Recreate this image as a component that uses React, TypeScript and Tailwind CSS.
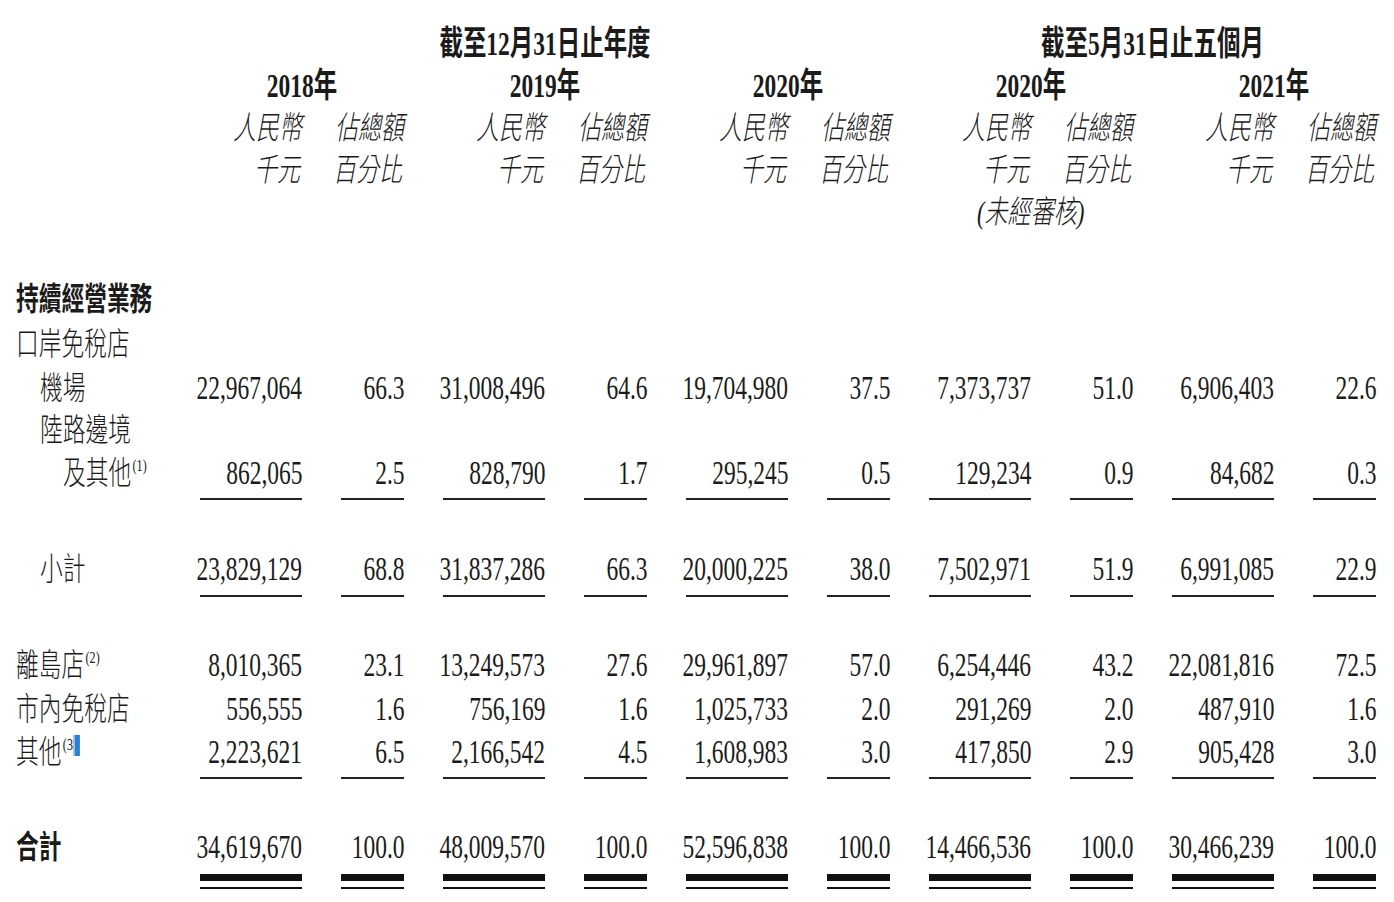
import React from "react";

const GRID = "grid grid-cols-[161px_repeat(5,102px_63px)] gap-x-[39px]";

type Line = {
  label: string;
  note?: string;
  indent: string;
  bold?: boolean;
  h: string;
  vals?: string[];
};

const Num = ({ v }: { v: string }) => (
  <div className="flex justify-end items-center">
    <span className="inline-block whitespace-nowrap origin-right scale-x-[0.69] text-[34px] leading-none">{v}</span>
  </div>
);

const Label = ({ row }: { row: Line }) => (
  <div className={`flex items-center ${row.indent}`}>
    <span
      className={`inline-block whitespace-nowrap origin-left scale-x-[0.71] text-[32px] leading-none ${
        row.bold ? "font-bold" : "font-light"
      }`}
    >
      {row.label}
      {row.note === "(3)" ? (
        <span className="inline-flex align-top items-start text-[17px] ml-[2px] font-normal">
          (3<span className="inline-block w-[9px] h-[21px] mt-[-1px] ml-[1px] bg-[#2f7fd0] border-l-2 border-[#9cc8ef]" />
        </span>
      ) : row.note ? (
        <span className="align-top text-[17px] ml-[2px] font-normal">{row.note}</span>
      ) : null}
    </span>
  </div>
);

const DataRow = ({ row }: { row: Line }) => (
  <div className={`${GRID} ${row.h}`}>
    <Label row={row} />
    {row.vals ? row.vals.map((v, i) => <Num key={i} v={v} />) : null}
  </div>
);

const Rule = ({ top, double }: { top: string; double?: boolean }) => (
  <div className={`${GRID} ${top}`}>
    <div />
    {Array.from({ length: 10 }).map((_, i) =>
      double ? (
        <div key={i} className="flex flex-col">
          <div className="h-[7px] bg-[#111]" />
          <div className="h-[2px] mt-[6px] bg-[#111]" />
        </div>
      ) : (
        <div key={i} className="h-[2px] bg-[#222]" />
      )
    )}
  </div>
);

const Cond = ({
  children,
  origin = "origin-right",
  cls = "",
}: {
  children: React.ReactNode;
  origin?: string;
  cls?: string;
}) => <span className={`inline-block whitespace-nowrap leading-none ${origin} ${cls}`}>{children}</span>;

const years = ["2018年", "2019年", "2020年", "2020年", "2021年"];

export default function App() {
  return (
    <div className="w-[1394px] h-[902px] overflow-hidden bg-white text-[#1b1b1b] font-['Liberation_Serif','Noto_Sans_CJK_TC',serif] pt-[23px]">
      {/* period headers */}
      <div className={`${GRID} h-[42px]`}>
        <div />
        <div className="col-span-6 flex justify-center items-center">
          <Cond origin="origin-center" cls="scale-x-[0.69] text-[34px] font-bold">截至12月31日止年度</Cond>
        </div>
        <div className="col-span-4 flex justify-center items-center">
          <Cond origin="origin-center" cls="scale-x-[0.69] text-[34px] font-bold">截至5月31日止五個月</Cond>
        </div>
      </div>

      <div className={`${GRID} h-[42px]`}>
        <div />
        {years.map((y, i) => (
          <div key={i} className="col-span-2 flex justify-center items-center">
            <Cond origin="origin-center" cls="scale-x-[0.69] text-[34px] font-bold">{y}</Cond>
          </div>
        ))}
      </div>

      <div className={`${GRID} h-[41px]`}>
        <div />
        {years.map((_, i) => (
          <React.Fragment key={i}>
            <div className="flex justify-end items-center">
              <Cond cls="scale-x-[0.72] text-[32px] italic font-light">人民幣</Cond>
            </div>
            <div className="flex justify-end items-center">
              <Cond cls="scale-x-[0.72] text-[32px] italic font-light">佔總額</Cond>
            </div>
          </React.Fragment>
        ))}
      </div>

      <div className={`${GRID} h-[43px]`}>
        <div />
        {years.map((_, i) => (
          <React.Fragment key={i}>
            <div className="flex justify-end items-center pr-[2px]">
              <Cond cls="scale-x-[0.72] text-[32px] italic font-light">千元</Cond>
            </div>
            <div className="flex justify-end items-center pr-[2px]">
              <Cond cls="scale-x-[0.72] text-[32px] italic font-light">百分比</Cond>
            </div>
          </React.Fragment>
        ))}
      </div>

      <div className={`${GRID} h-[42px]`}>
        <div className="col-span-7" />
        <div className="col-span-2 flex justify-center items-center">
          <Cond origin="origin-center" cls="scale-x-[0.72] text-[32px] italic font-light">(未經審核)</Cond>
        </div>
      </div>

      <div className="h-[44px]" />

      <DataRow row={{ label: "持續經營業務", indent: "pl-[16px]", bold: true, h: "h-[44px]" }} />
      <DataRow row={{ label: "口岸免稅店", indent: "pl-[16px]", h: "h-[46px]" }} />
      <DataRow
        row={{
          label: "機場",
          indent: "pl-[40px]",
          h: "h-[42px]",
          vals: ["22,967,064", "66.3", "31,008,496", "64.6", "19,704,980", "37.5", "7,373,737", "51.0", "6,906,403", "22.6"],
        }}
      />
      <DataRow row={{ label: "陸路邊境", indent: "pl-[40px]", h: "h-[42px]" }} />
      <DataRow
        row={{
          label: "及其他",
          note: "(1)",
          indent: "pl-[63px]",
          h: "h-[44px]",
          vals: ["862,065", "2.5", "828,790", "1.7", "295,245", "0.5", "129,234", "0.9", "84,682", "0.3"],
        }}
      />
      <Rule top="pt-[3px]" />

      <div className="h-[47px]" />
      <DataRow
        row={{
          label: "小計",
          indent: "pl-[40px]",
          h: "h-[44px]",
          vals: ["23,829,129", "68.8", "31,837,286", "66.3", "20,000,225", "38.0", "7,502,971", "51.9", "6,991,085", "22.9"],
        }}
      />
      <Rule top="pt-[4px]" />

      <div className="h-[46px]" />
      <DataRow
        row={{
          label: "離島店",
          note: "(2)",
          indent: "pl-[16px]",
          h: "h-[44px]",
          vals: ["8,010,365", "23.1", "13,249,573", "27.6", "29,961,897", "57.0", "6,254,446", "43.2", "22,081,816", "72.5"],
        }}
      />
      <DataRow
        row={{
          label: "市內免稅店",
          indent: "pl-[16px]",
          h: "h-[44px]",
          vals: ["556,555", "1.6", "756,169", "1.6", "1,025,733", "2.0", "291,269", "2.0", "487,910", "1.6"],
        }}
      />
      <DataRow
        row={{
          label: "其他",
          note: "(3)",
          indent: "pl-[16px]",
          h: "h-[41px]",
          vals: ["2,223,621", "6.5", "2,166,542", "4.5", "1,608,983", "3.0", "417,850", "2.9", "905,428", "3.0"],
        }}
      />
      <Rule top="pt-[5px]" />

      <div className="h-[46px]" />
      <DataRow
        row={{
          label: "合計",
          indent: "pl-[16px]",
          bold: true,
          h: "h-[44px]",
          vals: ["34,619,670", "100.0", "48,009,570", "100.0", "52,596,838", "100.0", "14,466,536", "100.0", "30,466,239", "100.0"],
        }}
      />
      <Rule top="pt-[5px]" double />
    </div>
  );
}
